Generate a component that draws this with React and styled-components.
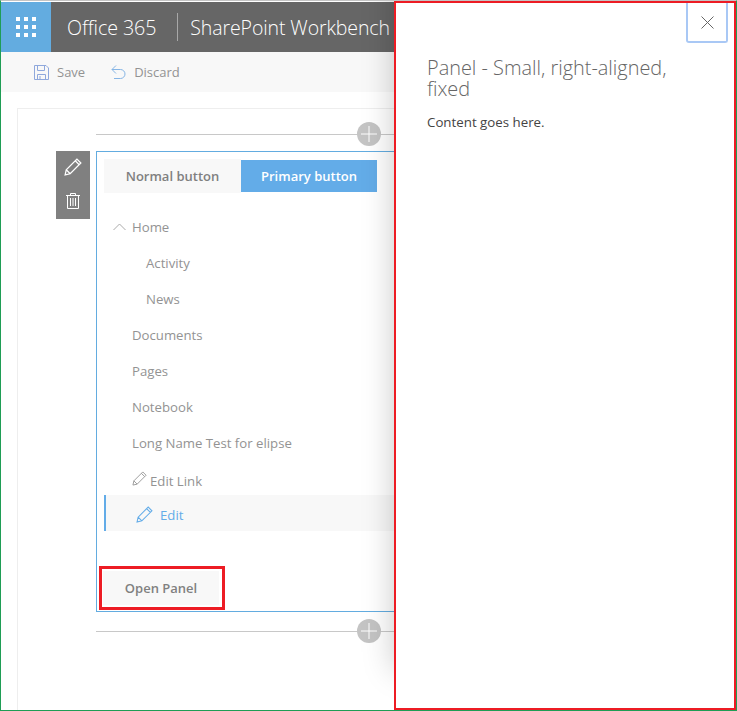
import React from "react";
import styled, { createGlobalStyle } from "styled-components";

const Global = createGlobalStyle`
  html, body { margin: 0; padding: 0; background: #fff; }
  * { box-sizing: border-box; }
`;

const Page = styled.div`
  position: relative;
  width: 737px;
  height: 711px;
  overflow: hidden;
  background: #fff;
  font-family: "Open Sans", "Noto Sans", sans-serif;
  padding-top: 1px;
  border-left: 1px solid #1f9d55;
  border-right: 1px solid #1f9d55;
  border-bottom: 1px solid #1f9d55;
  border-top: 1px solid #c4c4c4;
`;

const Suite = styled.header`
  display: flex;
  align-items: center;
  height: 50px;
  background: #666;
  color: #fff;
`;

const Waffle = styled.div`
  display: grid;
  grid-template-columns: repeat(3, 4px);
  grid-auto-rows: 4px;
  gap: 3.7px;
  align-content: center;
  justify-content: center;
  width: 50px;
  height: 50px;
  background: #63ace0;
`;

const Dot = styled.span`
  background: #fff;
`;

const Brand = styled.span`
  margin-left: 16px;
  font-size: 19.7px;
  font-weight: 300;
  letter-spacing: -0.1px;
`;

const Product = styled.span`
  font-size: 19.5px;
  font-weight: 300;
  letter-spacing: -0.1px;
`;

const Divider = styled.span`
  width: 1px;
  height: 28px;
  margin: 0 12px 0 21px;
  background: #a8a8a8;
`;

const Toolbar = styled.div`
  display: flex;
  align-items: center;
  height: 40px;
  padding-left: 33px;
  background: #f8f8f8;
`;

const ToolItem = styled.span`
  display: inline-flex;
  align-items: center;
  gap: 8px;
  margin-right: ${(p) => p.$gap || 0}px;
  font-size: 13px;
  color: #939393;
`;

const Canvas = styled.div`
  margin: 16px 0 0 16px;
  height: 620px;
  width: 800px;
  padding: 25px 0 0 78px;
  border: 1px solid #eee;
`;

const Hint = styled.div`
  position: relative;
  height: 1px;
  background: #c8c8c8;
  margin-right: 60px;
`;

const PlusBadge = styled.span`
  position: absolute;
  left: 261px;
  top: -12px;
  width: 24px;
  height: 24px;
  border-radius: 50%;
  background: #c4c4c4;
  display: flex;
  align-items: center;
  justify-content: center;
`;

const Zone = styled.div`
  position: relative;
  margin: 16px 0 19px;
  width: 500px;
  height: 461px;
  padding: 7px 0 0 7px;
  border: 1px solid #63ace0;
`;

const ToolBox = styled.div`
  position: absolute;
  left: -41px;
  top: -1px;
  width: 34px;
  height: 68px;
  background: #808080;
  display: flex;
  flex-direction: column;
  align-items: center;
  gap: 17px;
  padding-top: 7px;
`;

const ButtonRow = styled.div`
  display: flex;
  align-items: center;
`;

const Btn = styled.span`
  display: flex;
  align-items: center;
  justify-content: center;
  width: ${(p) => p.$w}px;
  height: ${(p) => (p.$primary ? 32 : 34)}px;
  background: ${(p) => (p.$primary ? "#63ace8" : "#f8f8f8")};
  color: ${(p) => (p.$primary ? "#fff" : "#808080")};
  font-size: 13px;
  font-weight: 600;
`;

const Nav = styled.nav`
  margin-top: 16px;
  display: flex;
  flex-direction: column;
`;

const NavItem = styled.div`
  display: flex;
  align-items: center;
  height: 36px;
  padding-left: ${(p) => p.$indent || 28}px;
  font-size: 13.2px;
  color: #939393;
`;

const EditLinkItem = styled(NavItem)`
  height: 34px;
  padding-top: 6px;
`;

const ChevronSlot = styled.span`
  display: inline-flex;
  width: 28px;
  margin-left: -28px;
  padding-left: 9px;
`;

const ActiveItem = styled.div`
  display: flex;
  align-items: center;
  gap: 7px;
  height: 36px;
  padding: 3px 0 0 30px;
  border-left: 2px solid #63ace8;
  background: #f8f8f8;
  font-size: 13.2px;
  color: #63ace8;
`;

const EditLinkIcon = styled.span`
  display: inline-flex;
  margin-right: 3px;
  transform: translateY(-3px);
`;

const Highlight = styled.div`
  display: inline-flex;
  margin: 35px 0 0 -5px;
  padding: 2px 3px 2px 1px;
  border: 3px solid #ed1c24;
`;

const OpenBtn = styled.span`
  display: flex;
  align-items: center;
  justify-content: center;
  width: 116px;
  height: 34px;
  background: #f8f8f8;
  color: #808080;
  font-size: 13px;
  font-weight: 600;
`;

const Panel = styled.aside`
  position: absolute;
  left: 393px;
  top: 0;
  width: 342px;
  height: 709px;
  background: #fff;
  border: 2px solid #ed1c24;
  box-shadow: 0 -40px 30px rgba(0, 0, 0, 0.22);
  padding: 54px 30px 0 31px;
`;

const CloseBtn = styled.span`
  position: absolute;
  right: 6px;
  top: 0;
  width: 42px;
  height: 40px;
  display: flex;
  align-items: center;
  justify-content: center;
  border: 2px solid #a9c8f5;
  border-top: none;
  border-radius: 0 0 3px 3px;
`;

const PanelTitle = styled.h1`
  margin: 0;
  font-size: 19.9px;
  line-height: 21px;
  font-weight: 300;
  color: #666;
`;

const PanelBody = styled.p`
  margin: 14px 0 0;
  font-size: 13.3px;
  line-height: 18px;
  color: #444;
`;

const Pencil = ({ size = 16, color = "#fff", w = 1 }) => (
  <svg width={size} height={size} viewBox="0 0 16 16" fill="none" stroke={color} strokeWidth={w}>
    <path d="M1 15l1-4.5L11.5 1 15 4.5 5.5 14 1 15zM2 10.5L5.5 14M10 2.5L13.5 6" />
  </svg>
);

const Plus = () => (
  <svg width="16" height="16" viewBox="0 0 16 16" stroke="#fff" strokeWidth="1">
    <path d="M8 0v16M0 8h16" />
  </svg>
);

export default function App() {
  return (
    <Page>
      <Global />
      <Suite>
        <Waffle>
          {Array.from({ length: 9 }, (_, i) => (
            <Dot key={i} />
          ))}
        </Waffle>
        <Brand>Office 365</Brand>
        <Divider />
        <Product>SharePoint Workbench</Product>
      </Suite>
      <Toolbar>
        <ToolItem $gap={26}>
          <svg width="15" height="15" viewBox="0 0 15 15" fill="none" stroke="#8fa8dc">
            <path d="M.5.5h11.5l2.5 2.5v11.5H.5zM3.5.5v5h7v-5M3.5 14.5v-5h8v5M6 11v3.5" />
          </svg>
          Save
        </ToolItem>
        <ToolItem>
          <svg width="15" height="15" viewBox="0 0 15 15" fill="none" stroke="#86b5e5">
            <path d="M5 .5L1 4.5l4 4M1 4.5h8.5a4.5 4.5 0 0 1 0 9H3" />
          </svg>
          Discard
        </ToolItem>
      </Toolbar>
      <Canvas>
        <Hint>
          <PlusBadge><Plus /></PlusBadge>
        </Hint>
        <Zone>
          <ToolBox>
            <Pencil size={18} w={1.1} />
            <svg width="14" height="16" viewBox="0 0 14 16" fill="none" stroke="#fff">
              <path d="M0 2.5h14M4.5 2.5V.5h5v2M1.5 2.5v13h11v-13M4.5 5v8M7 5v8M9.5 5v8" />
            </svg>
          </ToolBox>
          <ButtonRow>
            <Btn $w={137}>Normal button</Btn>
            <Btn $w={136} $primary>Primary button</Btn>
          </ButtonRow>
          <Nav>
            <NavItem>
              <ChevronSlot>
                <svg width="13" height="8" viewBox="0 0 13 8" fill="none" stroke="#aaa">
                  <path d="M.5 7L6.5 1l6 6" />
                </svg>
              </ChevronSlot>
              Home
            </NavItem>
            <NavItem $indent={42}>Activity</NavItem>
            <NavItem $indent={42}>News</NavItem>
            <NavItem>Documents</NavItem>
            <NavItem>Pages</NavItem>
            <NavItem>Notebook</NavItem>
            <NavItem>Long Name Test for elipse</NavItem>
            <EditLinkItem>
              <EditLinkIcon><Pencil size={15} color="#999" /></EditLinkIcon>
              Edit Link
            </EditLinkItem>
            <ActiveItem>
              <Pencil size={17} color="#63ace8" />
              Edit
            </ActiveItem>
          </Nav>
          <Highlight>
            <OpenBtn>Open Panel</OpenBtn>
          </Highlight>
        </Zone>
        <Hint>
          <PlusBadge><Plus /></PlusBadge>
        </Hint>
      </Canvas>
      <Panel>
        <CloseBtn>
          <svg width="13" height="13" viewBox="0 0 13 13" stroke="#666" strokeWidth="1">
            <path d="M.5.5l12 12M12.5.5l-12 12" />
          </svg>
        </CloseBtn>
        <PanelTitle>Panel - Small, right-aligned, fixed</PanelTitle>
        <PanelBody>Content goes here.</PanelBody>
      </Panel>
    </Page>
  );
}
